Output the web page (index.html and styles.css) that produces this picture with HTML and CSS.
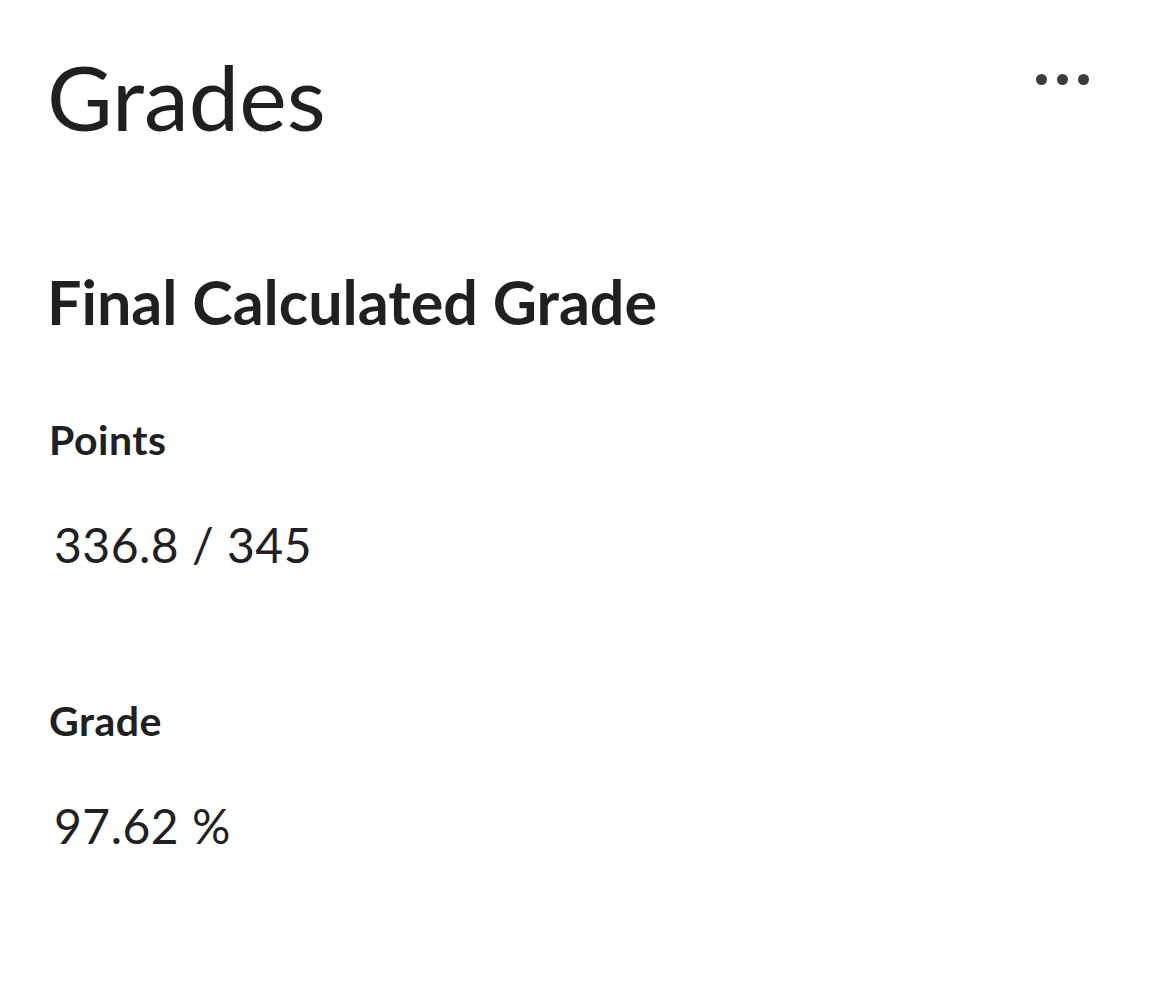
FILE: index.html
```html
<!DOCTYPE html>
<html>
<head>
<meta charset="utf-8">
<link rel="stylesheet" href="styles.css">
</head>
<body>
<div class="page">
  <header class="top">
    <h1 class="title">Grades</h1>
    <button class="more" aria-label="More options">
      <span class="dot"></span><span class="dot"></span><span class="dot"></span>
    </button>
  </header>
  <section class="final">
    <h2 class="heading">Final Calculated Grade</h2>
    <div class="field field-first">
      <div class="label">Points</div>
      <div class="value">336.8 / 345</div>
    </div>
    <div class="field">
      <div class="label">Grade</div>
      <div class="value">97.62 %</div>
    </div>
  </section>
</div>
</body>
</html>
```
FILE: styles.css
```css
html, body {
  margin: 0;
  padding: 0;
  background: #ffffff;
}
body {
  font-family: Lato, "Noto Sans", sans-serif;
  color: #1f2022;
}
.page {
  width: 1169px;
  height: 1002px;
  box-sizing: border-box;
  padding: 0 0 0 47px;
}
.top {
  display: flex;
  justify-content: space-between;
  align-items: flex-start;
  padding-right: 80px;
}
.title {
  margin: 0;
  font-weight: 400;
  font-size: 90px;
  line-height: 1;
  padding-top: 51px;
}
.more {
  display: flex;
  gap: 10px;
  border: 0;
  background: none;
  padding: 0;
  margin-top: 74px;
}
.dot {
  width: 11px;
  height: 11px;
  border-radius: 50%;
  background: #3b3c3e;
}
.final {
  padding-top: 130px;
}
.heading {
  margin: 0;
  font-weight: 700;
  font-size: 61px;
  line-height: 1;
}
.field {
  padding-top: 131px;
}
.field-first {
  padding-top: 87px;
}
.label {
  font-weight: 700;
  font-size: 41px;
  letter-spacing: 0.5px;
  line-height: 1;
  padding-left: 2px;
}
.value {
  font-weight: 400;
  font-size: 48px;
  letter-spacing: 0.5px;
  line-height: 1;
  padding-left: 7px;
  padding-top: 61px;
}
```
